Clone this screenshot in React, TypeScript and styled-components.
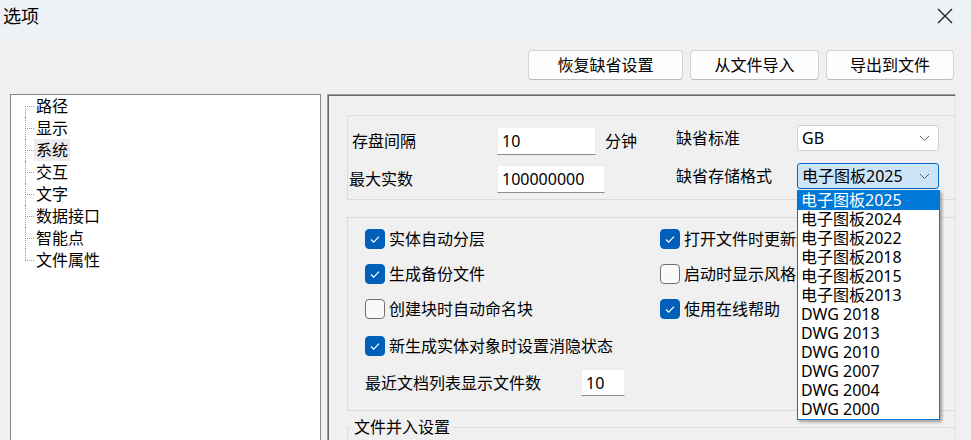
import React from "react";
import styled, { createGlobalStyle } from "styled-components";

const GlobalStyle = createGlobalStyle`
  html, body {
    margin: 0;
    padding: 0;
    background: #f0f0f0;
  }
  body {
    font-family: "Noto Sans", "Noto Sans CJK SC", sans-serif;
    font-size: 16px;
    color: #000;
    overflow: hidden;
  }
`;

const treeItems = ["路径", "显示", "系统", "交互", "文字", "数据接口", "智能点", "文件属性"];

const formats = [
  "电子图板2025",
  "电子图板2024",
  "电子图板2022",
  "电子图板2018",
  "电子图板2015",
  "电子图板2013",
  "DWG 2018",
  "DWG 2013",
  "DWG 2010",
  "DWG 2007",
  "DWG 2004",
  "DWG 2000",
];

const Chevron = () => (
  <svg width="11" height="7" viewBox="0 0 11 7">
    <path d="M1 1 L5.5 5.5 L10 1" fill="none" stroke="#5f5f5f" strokeWidth="1" />
  </svg>
);

const CheckBox: React.FC<{ checked?: boolean; label: string }> = ({ checked, label }) => (
  <CheckRow>
    <Box checked={checked}>
      {checked && (
        <svg width="20" height="20" viewBox="0 0 20 20">
          <polyline points="6,10.5 8.7,13.2 14,7.6" fill="none" stroke="#fff" strokeWidth="1.2" />
        </svg>
      )}
    </Box>
    <span>{label}</span>
  </CheckRow>
);

const App: React.FC = () => {
  return (
    <Window>
      <GlobalStyle />
      <TitleBar>
        <Title>选项</Title>
        <CloseIcon width="16" height="16" viewBox="0 0 16 16">
          <path d="M1 1 L15 15 M15 1 L1 15" stroke="#1a1a1a" strokeWidth="1.3" />
        </CloseIcon>
      </TitleBar>

      <Toolbar>
        <Button width={155}>恢复缺省设置</Button>
        <Button width={129}>从文件导入</Button>
        <Button width={128}>导出到文件</Button>
      </Toolbar>

      <Main>
        <Tree>
          {treeItems.map((item) => (
            <TreeItem key={item}>
              <TreeLabel selected={item === "系统"}>{item}</TreeLabel>
            </TreeItem>
          ))}
        </Tree>

        <Panel>
          <GroupBox height={85}>
            <FieldsLeft>
              <FieldRow>
                <FieldLabel indent={4}>存盘间隔</FieldLabel>
                <TextBox width={99}>10</TextBox>
                <Unit>分钟</Unit>
              </FieldRow>
              <FieldRow gap={10}>
                <FieldLabel indent={1}>最大实数</FieldLabel>
                <TextBox width={108}>100000000</TextBox>
              </FieldRow>
            </FieldsLeft>
            <FieldsRight>
              <FieldRow>
                <SelectLabel>缺省标准</SelectLabel>
                <Select>
                  <span>GB</span>
                  <Chevron />
                </Select>
              </FieldRow>
              <FieldRow gap={12}>
                <SelectLabel>缺省存储格式</SelectLabel>
                <SelectWrap>
                  <Select active>
                    <span>电子图板2025</span>
                    <Chevron />
                  </Select>
                  <Dropdown>
                    {formats.map((f, i) => (
                      <Option key={f} highlighted={i === 0}>
                        {f}
                      </Option>
                    ))}
                  </Dropdown>
                </SelectWrap>
              </FieldRow>
            </FieldsRight>
          </GroupBox>

          <GroupBox height={194} spacing={17}>
            <CheckGrid>
              <CheckBox checked label="实体自动分层" />
              <CheckBox checked label="打开文件时更新缩略图" />
              <CheckBox checked label="生成备份文件" />
              <CheckBox label="启动时显示风格向导" />
              <CheckBox label="创建块时自动命名块" />
              <CheckBox checked label="使用在线帮助" />
              <WideCell>
                <CheckBox checked label="新生成实体对象时设置消隐状态" />
              </WideCell>
            </CheckGrid>
            <RecentRow>
              <RecentLabel>最近文档列表显示文件数</RecentLabel>
              <TextBox width={44} height={27}>10</TextBox>
            </RecentRow>
          </GroupBox>

          <GroupFrame>
            <Legend>文件并入设置</Legend>
          </GroupFrame>
        </Panel>
      </Main>
    </Window>
  );
};

const Window = styled.div`
  width: 971px;
  height: 440px;
  display: flex;
  flex-direction: column;
  background: #f0f0f0;
  overflow: hidden;
`;

const TitleBar = styled.div`
  height: 38px;
  flex: none;
  display: flex;
  justify-content: space-between;
  align-items: flex-start;
  padding: 7px 18px 0 3px;
  box-sizing: border-box;
  background: #eef2f6;
`;

const Title = styled.div`
  font-size: 18px;
  line-height: 18px;
`;

const CloseIcon = styled.svg`
  margin-top: 1px;
`;

const Toolbar = styled.div`
  display: flex;
  justify-content: flex-end;
  gap: 7px;
  padding: 12px 17px 0 0;
  flex: none;
`;

const Button = styled.div<{ width: number }>`
  width: ${(p) => p.width}px;
  height: 30px;
  box-sizing: border-box;
  display: flex;
  align-items: center;
  justify-content: center;
  background: #fdfdfd;
  border: 1px solid #d3d3d3;
  border-bottom-color: #bcbcbc;
  border-radius: 4px;
  font-size: 16px;
  line-height: 20px;
`;

const Main = styled.div`
  display: flex;
  flex: none;
  height: 360px;
  margin-top: 14px;
  padding-left: 10px;
`;

const Tree = styled.div`
  width: 311px;
  box-sizing: border-box;
  border: 1px solid #828790;
  background: #fff;
`;

const TreeItem = styled.div`
  position: relative;
  height: 22px;
  display: flex;
  align-items: center;
  padding-left: 23px;
  line-height: 20px;

  &::before {
    content: "";
    position: absolute;
    left: 14px;
    top: 11px;
    width: 9px;
    border-top: 1px dotted #9a9a9a;
  }

  &::after {
    content: "";
    position: absolute;
    left: 14px;
    top: 0;
    bottom: 0;
    border-left: 1px dotted #9a9a9a;
  }

  &:first-child::after {
    top: 11px;
  }

  &:last-child::after {
    bottom: 11px;
  }
`;

const TreeLabel = styled.span<{ selected?: boolean }>`
  padding: 1px 2px;
  background: ${(p) => (p.selected ? "#ececec" : "transparent")};
`;

const Panel = styled.div`
  width: 629px;
  margin-left: 6px;
  box-sizing: border-box;
  border-top: 1px solid #a0a0a0;
  border-left: 1px solid #a0a0a0;
  border-right: 1px solid #e3e3e3;
  box-shadow: inset 1px 1px 0 #696969;
  padding: 20px 0 0 19px;
  overflow: hidden;
`;

const GroupBox = styled.div<{ height: number; spacing?: number }>`
  height: ${(p) => p.height}px;
  margin-top: ${(p) => p.spacing || 0}px;
  box-sizing: border-box;
  border: 1px solid #dcdcdc;
  border-right: none;
  display: flex;
  flex-wrap: wrap;
  align-content: flex-start;
`;

const FieldsLeft = styled.div`
  width: 328px;
  padding-top: 11px;
`;

const FieldsRight = styled.div`
  padding-top: 9px;
`;

const FieldRow = styled.div<{ gap?: number }>`
  display: flex;
  align-items: center;
  margin-top: ${(p) => p.gap || 0}px;
  line-height: 20px;
`;

const FieldLabel = styled.div<{ indent: number }>`
  width: 149px;
  box-sizing: border-box;
  padding-left: ${(p) => p.indent}px;
`;

const TextBox = styled.div<{ width: number; height?: number }>`
  width: ${(p) => p.width}px;
  height: ${(p) => p.height || 28}px;
  box-sizing: border-box;
  display: flex;
  align-items: center;
  padding-left: 4px;
  background: #fff;
  border: 1px solid #ececec;
  border-bottom-color: #8b8b8b;
  font-size: 16px;
`;

const Unit = styled.span`
  margin-left: 9px;
`;

const SelectLabel = styled.div`
  width: 121px;
`;

const SelectWrap = styled.div`
  position: relative;
`;

const Select = styled.div<{ active?: boolean }>`
  width: 142px;
  height: 26px;
  box-sizing: border-box;
  display: flex;
  align-items: center;
  justify-content: space-between;
  padding: 0 8px 0 4px;
  background: ${(p) => (p.active ? "#cce4f7" : "#fff")};
  border: 1px solid ${(p) => (p.active ? "#0067c0" : "#d0d0d0")};
  border-radius: 3px;
`;

const Dropdown = styled.div`
  position: absolute;
  top: 27px;
  left: 0;
  z-index: 10;
  width: 143px;
  box-sizing: border-box;
  border: 1px solid #0078d4;
  background: #fff;
  box-shadow: 2px 2px 3px rgba(0, 0, 0, 0.35);
`;

const Option = styled.div<{ highlighted?: boolean }>`
  height: 19px;
  line-height: 19px;
  padding-left: 3px;
  background: ${(p) => (p.highlighted ? "#0078d7" : "transparent")};
  color: ${(p) => (p.highlighted ? "#fff" : "#000")};
  white-space: nowrap;
`;

const CheckGrid = styled.div`
  width: 100%;
  display: grid;
  grid-template-columns: 295px 1fr;
  grid-auto-rows: 35px;
  padding: 3px 0 0 17px;
`;

const WideCell = styled.div`
  grid-column: 1 / span 2;
  margin-top: 4px;
  display: flex;
`;

const CheckRow = styled.div`
  display: flex;
  align-items: center;
  gap: 4px;
  line-height: 20px;
  white-space: nowrap;
`;

const Box = styled.div<{ checked?: boolean }>`
  width: 20px;
  height: 20px;
  flex: none;
  box-sizing: border-box;
  border-radius: 4px;
  background: ${(p) => (p.checked ? "#005fb8" : "#f9f9f9")};
  border: 1px solid ${(p) => (p.checked ? "#005fb8" : "#6f6f6f")};
  display: flex;
  align-items: center;
  justify-content: center;

  svg {
    flex: none;
  }
`;

const RecentRow = styled.div`
  display: flex;
  align-items: center;
  margin-top: 8px;
  padding-left: 17px;
  line-height: 20px;
`;

const RecentLabel = styled.div`
  width: 216px;
`;

const GroupFrame = styled.div`
  margin-top: 16px;
  height: 40px;
  border-top: 1px solid #dcdcdc;
  border-left: 1px solid #dcdcdc;
  padding-left: 3px;
`;

const Legend = styled.div`
  width: fit-content;
  margin-top: -11px;
  padding: 0 3px;
  background: #f0f0f0;
  line-height: 20px;
`;

export default App;
